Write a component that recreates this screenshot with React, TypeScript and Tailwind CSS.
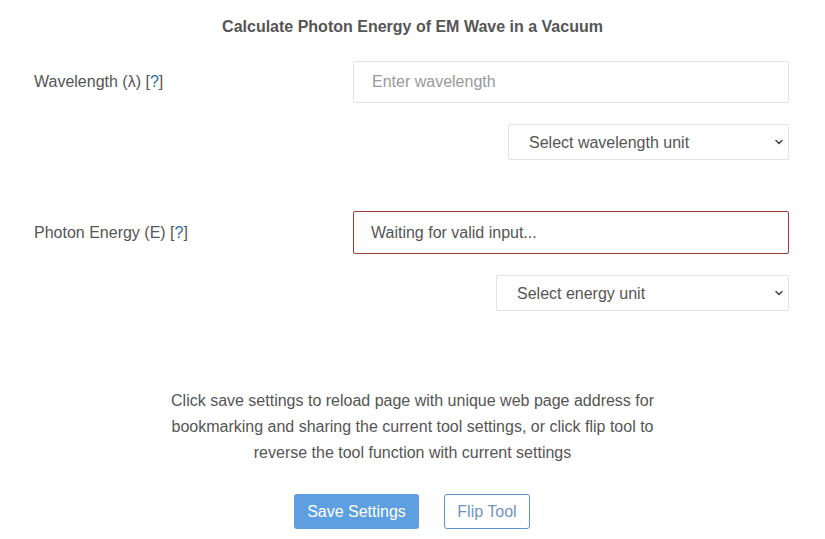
import { ChevronDown } from "lucide-react";

function Help() {
  return (
    <span>
      [<span className="text-[#2a6ca6]">?</span>]
    </span>
  );
}

function UnitSelect({ label, width }: { label: string; width: string }) {
  return (
    <div className={`relative ${width} h-[36px]`}>
      <select className="h-full w-full appearance-none rounded-[2px] border border-[#e3e3e3] bg-white pl-[20px] pt-[1px] text-[16px] text-[#555]">
        <option>{label}</option>
      </select>
      <ChevronDown
        size={12}
        strokeWidth={3}
        className="pointer-events-none absolute right-[4px] top-[12px] text-[#444]"
      />
    </div>
  );
}

export default function App() {
  return (
    <div className="h-[539px] w-[825px] bg-white font-['Liberation_Sans',Arial,sans-serif] text-[16px] text-[#555]">
      <h1 className="pt-[17px] text-center text-[16px] font-bold leading-[20px] text-[#555]">
        Calculate Photon Energy of EM Wave in a Vacuum
      </h1>

      <div className="mt-[24px] flex pl-[34px] pr-[36px]">
        <div className="w-[319px] pt-[11px] leading-[20px]">
          Wavelength (λ) <Help />
        </div>
        <div className="flex flex-1 flex-col items-end">
          <input
            placeholder="Enter wavelength"
            className="h-[42px] w-full rounded-[2px] border border-[#e3e3e3] pl-[18px] text-[16px] text-[#555] placeholder:text-[#999] outline-none"
          />
          <div className="mt-[21px]">
            <UnitSelect label="Select wavelength unit" width="w-[281px]" />
          </div>
        </div>
      </div>

      <div className="mt-[51px] flex pl-[34px] pr-[36px]">
        <div className="w-[319px] pt-[12px] leading-[20px]">
          Photon Energy (E) <Help />
        </div>
        <div className="flex flex-1 flex-col items-end">
          <div className="flex h-[43px] w-full items-center rounded-[2px] border border-[#a33a3a] pl-[17px] pt-[1px] text-[16px] text-[#555]">
            Waiting for valid input...
          </div>
          <div className="mt-[21px]">
            <UnitSelect label="Select energy unit" width="w-[293px]" />
          </div>
        </div>
      </div>

      <p className="mx-auto mt-[77px] w-[500px] text-center leading-[26px] text-[#555]">
        Click save settings to reload page with unique web page address for bookmarking and sharing the current tool settings, or click flip tool to reverse the tool function with current settings
      </p>

      <div className="mt-[28px] flex justify-center gap-[25px] pr-[1px]">
        <button className="h-[35px] w-[125px] rounded-[3px] bg-[#5d9fe0] text-[16px] text-white">
          Save Settings
        </button>
        <button className="h-[35px] w-[86px] rounded-[3px] border border-[#5b93cf] bg-white text-[16px] text-[#6d96c4]">
          Flip Tool
        </button>
      </div>
    </div>
  );
}
